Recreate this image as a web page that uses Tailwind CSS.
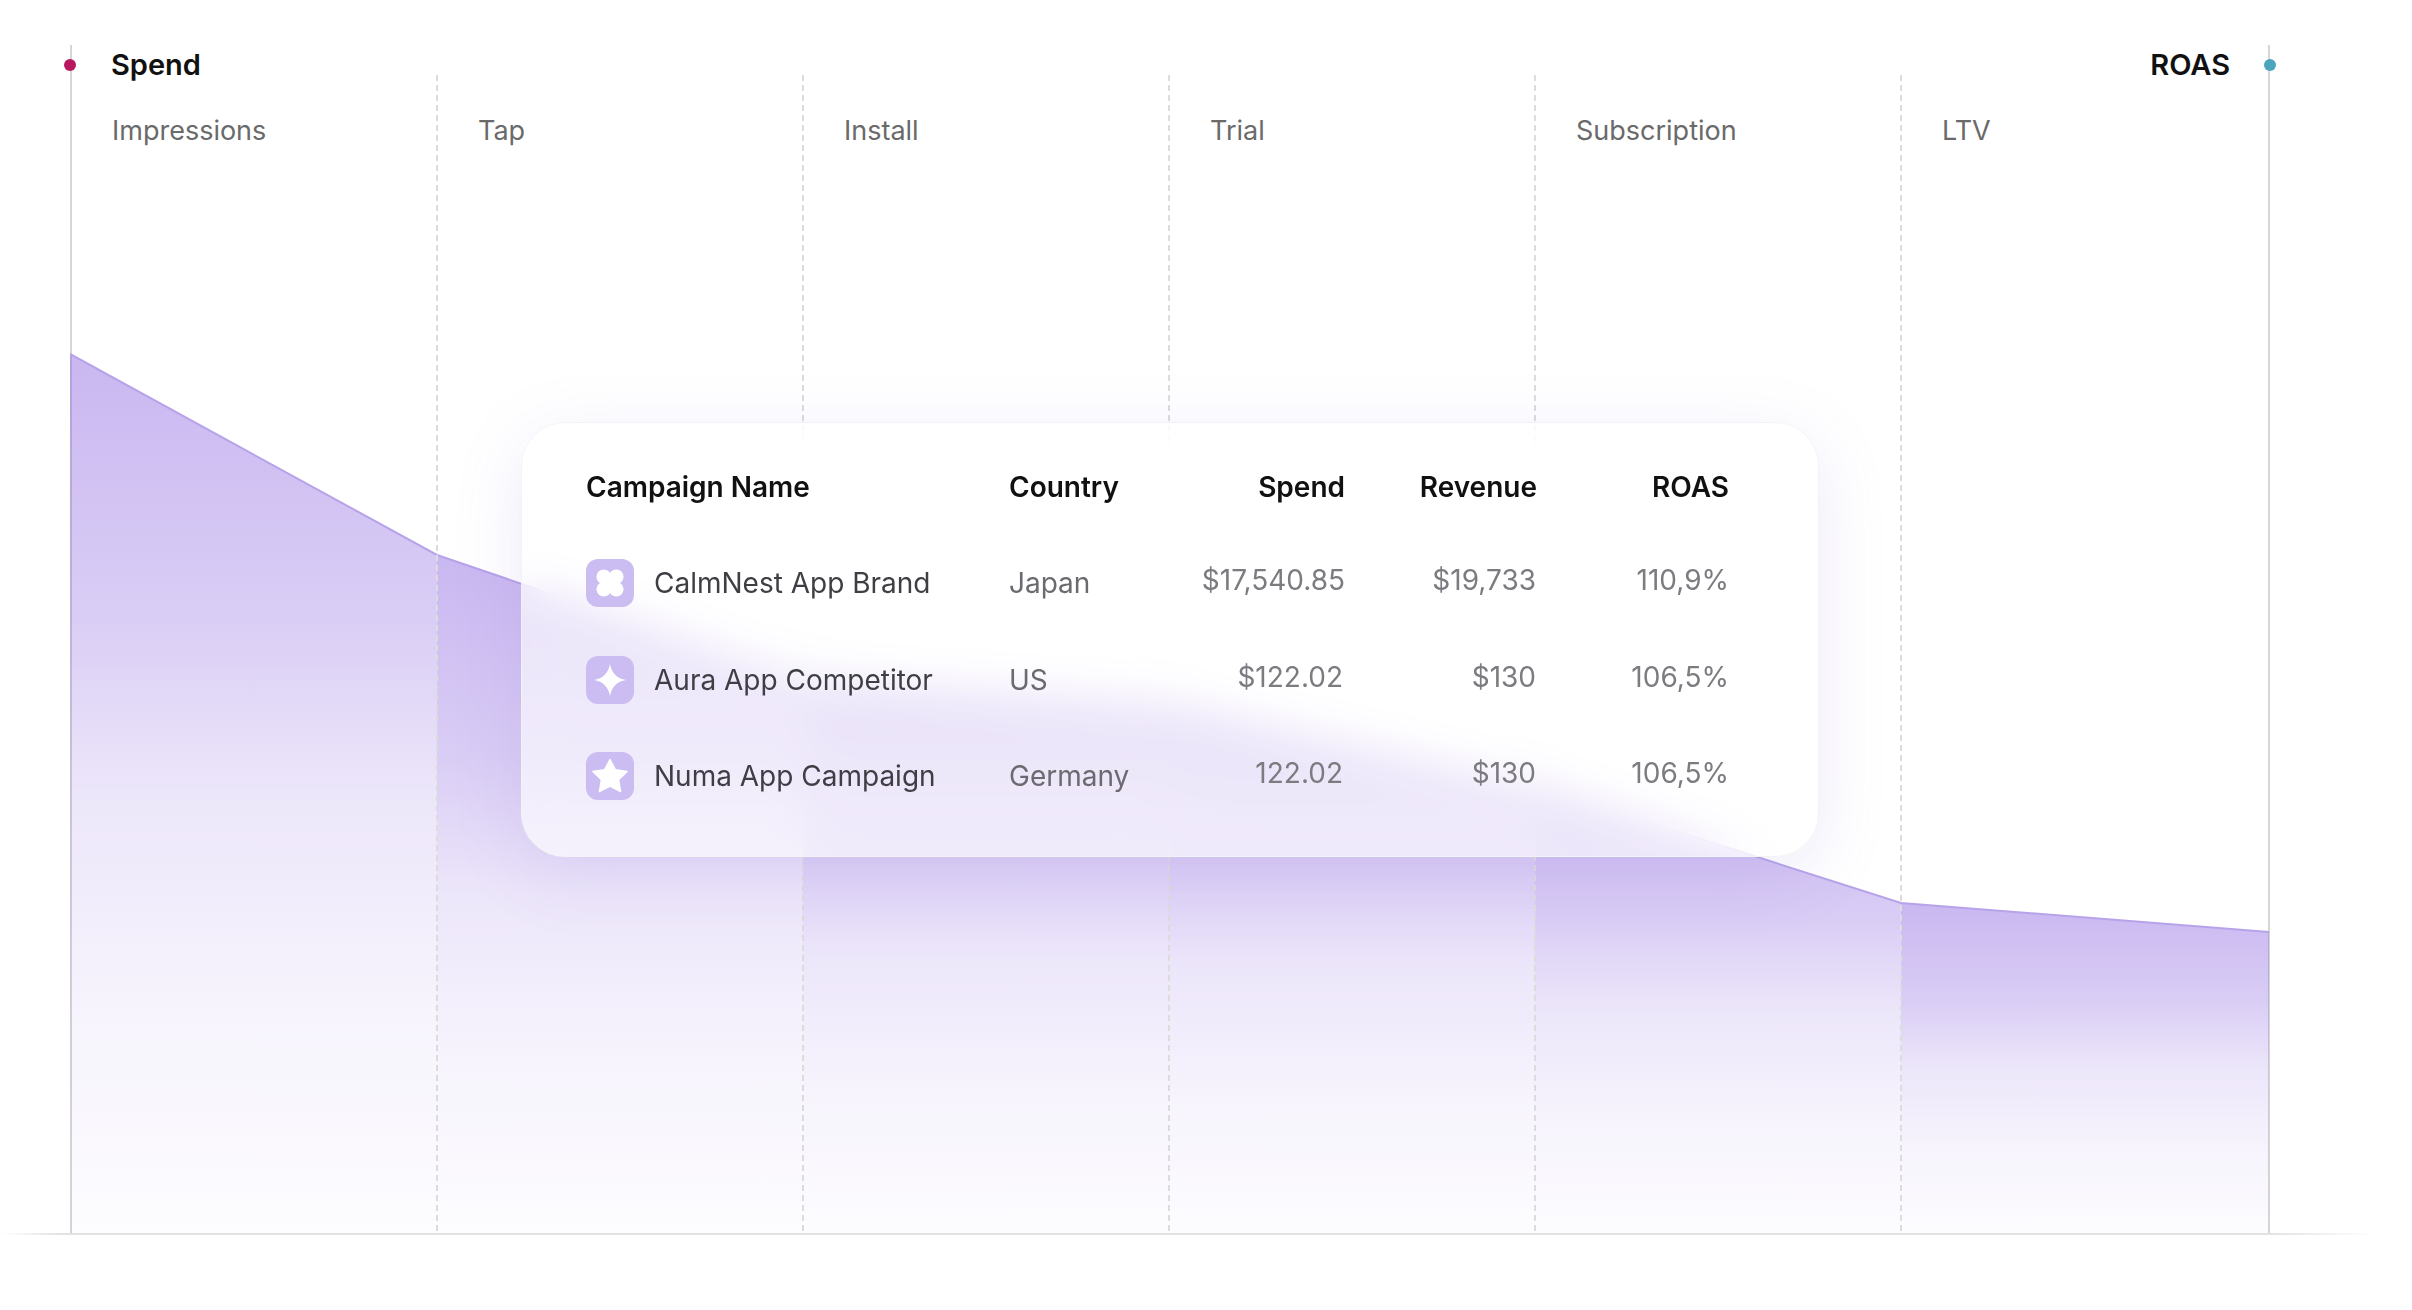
<!DOCTYPE html>
<html lang="en">
<head>
    <meta charset="UTF-8">
    <title>Campaign funnel</title>
    <script src="https://cdn.jsdelivr.net/npm/@tailwindcss/browser@4"></script>
</head>
<body class="bg-white">
    <div class="relative h-[1310px] w-[2412px] overflow-hidden bg-white text-[28px] [font-family:Inter,sans-serif]">
        <!-- funnel chart -->
        <div class="relative ml-[70px] mt-[45px] h-[1188px] w-[2200px] border-x-2 border-[#d6d6d6]">
            <svg class="absolute -left-[2px] top-0" width="2200" height="1188" viewBox="70 45 2200 1188" fill="none">
                <defs>
                    <linearGradient id="area" x1="0" y1="0" x2="0" y2="1">
                        <stop offset="0" stop-color="#8a63e0" stop-opacity="0.46"/>
                        <stop offset="0.3" stop-color="#8a63e0" stop-opacity="0.32"/>
                        <stop offset="0.5" stop-color="#8a63e0" stop-opacity="0.16"/>
                        <stop offset="0.75" stop-color="#8a63e0" stop-opacity="0.07"/>
                        <stop offset="1" stop-color="#8a63e0" stop-opacity="0.02"/>
                    </linearGradient>
                </defs>
                <polygon fill="url(#area)" points="70,354 437,555 437,1233 70,1233"/>
                <polygon fill="url(#area)" points="437,555 803,680 803,1233 437,1233"/>
                <polygon fill="url(#area)" points="803,680 1169,705 1169,1233 803,1233"/>
                <polygon fill="url(#area)" points="1169,705 1535,786 1535,1233 1169,1233"/>
                <polygon fill="url(#area)" points="1535,786 1901,903 1901,1233 1535,1233"/>
                <polygon fill="url(#area)" points="1901,903 2269,932 2269,1233 1901,1233"/>
                <polyline stroke="#b7a3ea" stroke-width="2" points="70,354 437,555 803,680 1169,705 1535,786 1901,903 2269,932"/>
                <g stroke="#dcdcdc" stroke-width="2" stroke-dasharray="6 4">
                    <line x1="437" y1="75" x2="437" y2="1233"/>
                    <line x1="803" y1="75" x2="803" y2="1233"/>
                    <line x1="1169" y1="75" x2="1169" y2="1233"/>
                    <line x1="1535" y1="75" x2="1535" y2="1233"/>
                    <line x1="1901" y1="75" x2="1901" y2="1233"/>
                </g>
            </svg>
            <span class="absolute -left-[8px] top-[14px] h-3 w-3 rounded-full bg-[#b9185f]"></span>
            <span class="absolute -right-[8px] top-[14px] h-3 w-3 rounded-full bg-[#4aa5bd]"></span>

            <div class="relative flex h-[30px] justify-between pl-[39px] pr-[38px] pt-[5px] text-[29px] font-semibold leading-[30px] text-[#111111]">
                <span>Spend</span>
                <span>ROAS</span>
            </div>
            <div class="relative grid grid-cols-6 text-[27px] leading-[30px] text-[#6a6a6a]">
                <div class="pl-[40px] pt-[41px]">Impressions</div>
                <div class="pl-[40px] pt-[41px]">Tap</div>
                <div class="pl-[40px] pt-[41px]">Install</div>
                <div class="pl-[40px] pt-[41px]">Trial</div>
                <div class="pl-[40px] pt-[41px]">Subscription</div>
                <div class="pl-[40px] pt-[41px]">LTV</div>
            </div>
        </div>
        <div class="h-[2px] w-full bg-[linear-gradient(to_right,transparent,#e2e2e2_2.5%,#e2e2e2_94%,transparent_98.5%)]"></div>

        <!-- campaign table card -->
        <div class="absolute left-[521px] top-[422px] h-[435px] w-[1298px] rounded-[44px] border border-[#f3f3f5] bg-white/60 pl-[64px] pt-[16px] shadow-[0_16px_70px_rgba(120,90,210,0.13)] backdrop-blur-[22px]">
            <div class="grid h-[96px] grid-cols-[423px_180px_156px_192px_192px] items-center font-semibold leading-[30px] text-[#111111]">
                <div>Campaign Name</div>
                <div>Country</div>
                <div class="text-right">Spend</div>
                <div class="text-right">Revenue</div>
                <div class="text-right">ROAS</div>
            </div>
            <div class="grid h-[96px] grid-cols-[423px_180px_156px_192px_192px] items-center leading-[30px] text-[#7c7b80]">
                <div class="flex items-center gap-5 text-[#3f3e45]">
                    <span class="flex h-12 w-12 items-center justify-center rounded-[12px] bg-[#cbbdf2]">
                        <svg width="48" height="48" viewBox="0 0 48 48" fill="#ffffff">
                            <circle cx="17.75" cy="17.75" r="7.25"/><circle cx="30.25" cy="17.75" r="7.25"/>
                            <circle cx="17.75" cy="30.25" r="7.25"/><circle cx="30.25" cy="30.25" r="7.25"/>
                            <rect x="19" y="19" width="10" height="10"/>
                        </svg>
                    </span>
                    <span>CalmNest App Brand</span>
                </div>
                <div class="text-[#6b6a70]">Japan</div>
                <div class="pb-[6px] text-right">$17,540.85</div>
                <div class="pb-[6px] pr-[1px] text-right">$19,733</div>
                <div class="pb-[6px] text-right">110,9%</div>
            </div>
            <div class="mt-[1px] grid h-[96px] grid-cols-[423px_180px_156px_192px_192px] items-center leading-[30px] text-[#7c7b80]">
                <div class="flex items-center gap-5 text-[#3f3e45]">
                    <span class="flex h-12 w-12 items-center justify-center rounded-[12px] bg-[#cbbdf2]">
                        <svg width="48" height="48" viewBox="0 0 48 48" fill="#ffffff">
                            <path d="M24 8C25.5 17 31 22.5 40 24C31 25.5 25.5 31 24 40C22.5 31 17 25.5 8 24C17 22.5 22.5 17 24 8Z"/>
                        </svg>
                    </span>
                    <span>Aura App Competitor</span>
                </div>
                <div class="text-[#6b6a70]">US</div>
                <div class="pb-[6px] pr-[2px] text-right">$122.02</div>
                <div class="pb-[6px] pr-[1px] text-right">$130</div>
                <div class="pb-[6px] text-right">106,5%</div>
            </div>
            <div class="grid h-[96px] grid-cols-[423px_180px_156px_192px_192px] items-center leading-[30px] text-[#7c7b80]">
                <div class="flex items-center gap-5 text-[#3f3e45]">
                    <span class="flex h-12 w-12 items-center justify-center rounded-[12px] bg-[#cbbdf2]">
                        <svg width="48" height="48" viewBox="0 0 48 48" fill="#ffffff" stroke="#ffffff" stroke-width="1.5" stroke-linejoin="round">
                            <polygon points="24,7.5 29.3,17.7 41.1,19.4 32.6,27.8 34.6,39.6 24,34 13.4,39.6 15.4,27.8 6.9,19.4 18.7,17.7"/>
                        </svg>
                    </span>
                    <span>Numa App Campaign</span>
                </div>
                <div class="text-[#6b6a70]">Germany</div>
                <div class="pb-[6px] pr-[2px] text-right">122.02</div>
                <div class="pb-[6px] pr-[1px] text-right">$130</div>
                <div class="pb-[6px] text-right">106,5%</div>
            </div>
        </div>
    </div>
</body>
</html>
